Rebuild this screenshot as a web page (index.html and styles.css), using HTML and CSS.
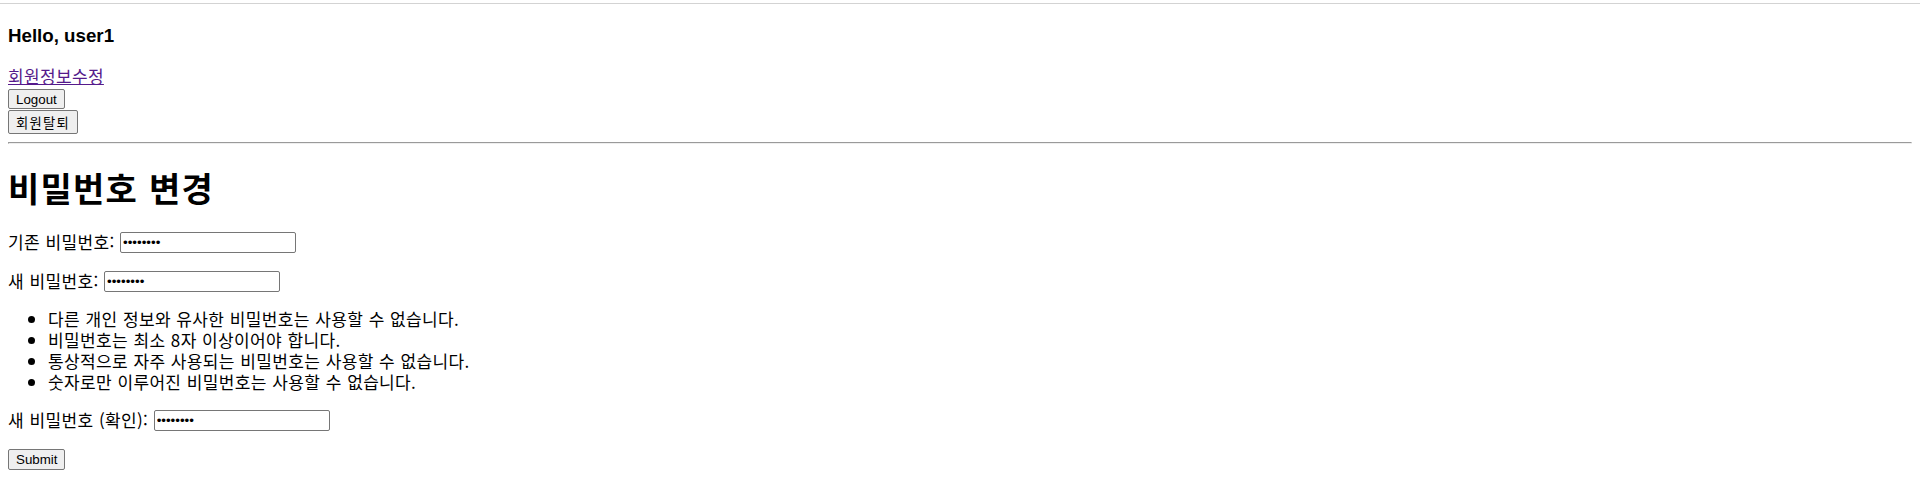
FILE: index.html
```html
<!DOCTYPE html>
<html lang="ko">
<head>
<meta charset="utf-8">
<title>비밀번호 변경</title>
<link rel="stylesheet" href="styles.css">
</head>
<body>
<div class="topbar"></div>
<div class="page">
  <h3 class="greeting">Hello, user1</h3>
  <div class="account-link"><a href="#" class="link">회원정보수정</a></div>
  <div class="account-actions">
    <form class="action-form"><button type="button" class="btn btn-logout">Logout</button></form>
    <form class="action-form"><button type="button" class="btn btn-withdraw">회원탈퇴</button></form>
  </div>
  <hr class="divider">
  <h1 class="title">비밀번호 변경</h1>
  <form class="pw-form">
    <p class="field"><label class="field-label">기존 비밀번호:</label> <input class="pw-input" type="password" value="12345678"></p>
    <p class="field"><label class="field-label">새 비밀번호:</label> <input class="pw-input" type="password" value="12345678"></p>
    <ul class="rules">
      <li class="rule">다른 개인 정보와 유사한 비밀번호는 사용할 수 없습니다.</li>
      <li class="rule">비밀번호는 최소 8자 이상이어야 합니다.</li>
      <li class="rule">통상적으로 자주 사용되는 비밀번호는 사용할 수 없습니다.</li>
      <li class="rule">숫자로만 이루어진 비밀번호는 사용할 수 없습니다.</li>
    </ul>
    <p class="field"><label class="field-label">새 비밀번호 (확인):</label> <input class="pw-input" type="password" value="12345678"></p>
    <p class="field"><button type="button" class="btn btn-submit">Submit</button></p>
  </form>
</div>
</body>
</html>
```
FILE: styles.css
```css
html, body {
  margin: 0;
  padding: 0;
  background: #ffffff;
}
body {
  font-family: "Noto Sans CJK KR", sans-serif;
  font-size: 17px;
  letter-spacing: 0.02em;
  word-spacing: 0.4px;
  color: #000000;
}
.topbar {
  height: 3px;
  border-bottom: 1px solid #d3d3d3;
}
.page {
  padding: 0 8px;
}
.greeting {
  font-family: "Liberation Sans", "Noto Sans CJK KR", sans-serif;
  font-size: 18.72px;
  font-weight: bold;
  letter-spacing: 0;
  word-spacing: 0;
  line-height: 21.2px;
  padding-top: 2.5px;
  margin: 18.72px 0;
}
.account-link {
  line-height: 21.33px;
}
.link {
  color: #551a8b;
  text-decoration: underline;
}
.account-actions {
  display: flex;
  flex-direction: column;
  align-items: flex-start;
}
.action-form {
  display: flex;
  margin: 0;
}
.btn {
  font-family: "Liberation Sans", "Noto Sans CJK KR", sans-serif;
  font-size: 13.333px;
  letter-spacing: 0;
  word-spacing: 0;
  color: #000000;
  background: #efefef;
  border: 1px solid #767676;
  border-radius: 2px;
  padding: 1px 7px;
  box-sizing: border-box;
  line-height: normal;
}
.btn-logout {
  height: 20px;
  margin-top: 2.6px;
}
.btn-withdraw {
  height: 24px;
  margin-top: 1px;
  letter-spacing: 1.2px;
}
.divider {
  margin: 8px 0;
}
.title {
  font-size: 34px;
  font-weight: bold;
  letter-spacing: 0.035em;
  line-height: 43px;
  margin: 21.44px 0;
}
.pw-form {
  margin: 0;
}
.field {
  margin: 16px 0;
  line-height: 23px;
}
.pw-input {
  box-sizing: border-box;
  width: 176px;
  height: 21px;
  border: 1px solid #767676;
  border-radius: 2px;
  padding: 1px 2px;
  font-family: "Liberation Sans", sans-serif;
  font-size: 13.333px;
  letter-spacing: 0;
  background: #ffffff;
  vertical-align: top;
  margin: 2px 0 0 0;
}
.btn-submit {
  height: 21px;
  vertical-align: top;
  margin: 2px 0 0 0;
}
.rules {
  margin: 16px 0;
  padding-left: 40px;
  line-height: 21px;
}
.rule {
  height: 21px;
}
```
